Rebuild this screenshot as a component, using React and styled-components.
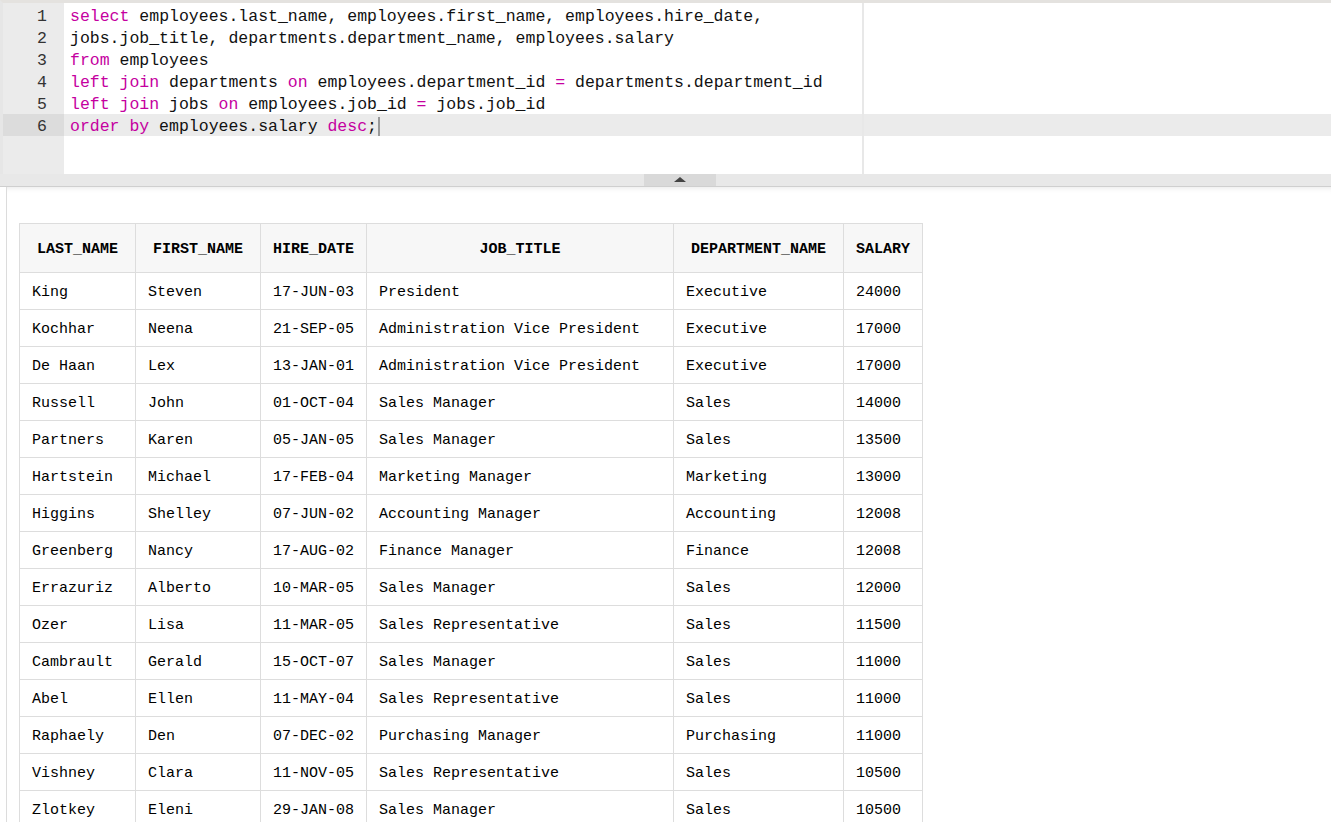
import React from "react";
import styled, { createGlobalStyle } from "styled-components";

const GlobalStyle = createGlobalStyle`
  html, body {
    margin: 0;
    padding: 0;
    background: #fff;
    overflow: hidden;
  }
  body {
    font-family: "Liberation Mono", "DejaVu Sans Mono", monospace;
    color: #111;
  }
`;

const Page = styled.div`
  display: flex;
  flex-direction: column;
  width: 1331px;
`;

const Editor = styled.div`
  display: flex;
  height: 171px;
  border-top: 3px solid #e4e2df;
  border-left: 3px solid #e6e6e6;
  background: #fff;
`;

const Gutter = styled.div`
  width: 61px;
  padding-top: 1px;
  background: #ebebeb;
  color: #333;
`;

const GutterCell = styled.div`
  box-sizing: border-box;
  height: 22px;
  padding-top: 3px;
  line-height: 19px;
  padding-right: 17px;
  text-align: right;
  font-size: 16.5px;
  background: ${(p) => (p.$active ? "#dcdcdc" : "transparent")};
`;

const Code = styled.div`
  flex: 1;
  position: relative;
  padding-top: 1px;

  &::after {
    content: "";
    position: absolute;
    top: 0;
    bottom: 0;
    left: 798px;
    width: 2px;
    background: #e8e8e8;
  }
`;

const CodeLine = styled.div`
  box-sizing: border-box;
  height: 22px;
  padding-top: 3px;
  line-height: 19px;
  padding-left: 6px;
  font-size: 16.5px;
  white-space: pre;
  color: #111;
  background: ${(p) => (p.$active ? "#ebebeb" : "transparent")};
`;

const Kw = styled.span`
  color: #c500a0;
`;

const Caret = styled.span`
  display: inline-block;
  width: 2px;
  height: 19px;
  margin-left: 1px;
  vertical-align: -5px;
  background: #999;
`;

const Splitter = styled.div`
  height: 12px;
  background: #e8e8e8;
  border-bottom: 1px solid #cfcfcf;
  display: flex;
  padding-left: 644px;
`;

const Handle = styled.div`
  width: 72px;
  height: 12px;
  background: #d9d9d9;
  display: flex;
  justify-content: center;
  align-items: flex-start;
  padding-top: 3px;
  box-sizing: border-box;

  &::before {
    content: "";
    width: 0;
    height: 0;
    border-left: 6px solid transparent;
    border-right: 6px solid transparent;
    border-bottom: 5px solid #444;
  }
`;

const Results = styled.div`
  margin-left: 6px;
  border-left: 1px solid #dcdcdc;
  padding: 36px 0 0 12px;
  box-shadow: inset 0 6px 6px -6px rgba(0, 0, 0, 0.12);
  min-height: 700px;
`;

const Table = styled.table`
  border-collapse: collapse;
  table-layout: fixed;
  width: 903px;
  font-size: 15px;
  font-family: "Liberation Mono", "DejaVu Sans Mono", monospace;
`;

const Th = styled.th`
  height: 46px;
  padding: 2px 12px 0;
  background: #f7f7f7;
  border: 1px solid #dddddd;
  font-weight: bold;
  text-align: center;
  color: #000;
  white-space: nowrap;
`;

const Td = styled.td`
  height: 34px;
  padding: 2px 12px 0;
  border: 1px solid #dddddd;
  color: #000;
  white-space: nowrap;
`;

const columns = [
  { key: "last", label: "LAST_NAME", width: 116 },
  { key: "first", label: "FIRST_NAME", width: 125 },
  { key: "hire", label: "HIRE_DATE", width: 106 },
  { key: "job", label: "JOB_TITLE", width: 307 },
  { key: "dept", label: "DEPARTMENT_NAME", width: 170 },
  { key: "salary", label: "SALARY", width: 79 },
];

const rows = [
  ["King", "Steven", "17-JUN-03", "President", "Executive", "24000"],
  ["Kochhar", "Neena", "21-SEP-05", "Administration Vice President", "Executive", "17000"],
  ["De Haan", "Lex", "13-JAN-01", "Administration Vice President", "Executive", "17000"],
  ["Russell", "John", "01-OCT-04", "Sales Manager", "Sales", "14000"],
  ["Partners", "Karen", "05-JAN-05", "Sales Manager", "Sales", "13500"],
  ["Hartstein", "Michael", "17-FEB-04", "Marketing Manager", "Marketing", "13000"],
  ["Higgins", "Shelley", "07-JUN-02", "Accounting Manager", "Accounting", "12008"],
  ["Greenberg", "Nancy", "17-AUG-02", "Finance Manager", "Finance", "12008"],
  ["Errazuriz", "Alberto", "10-MAR-05", "Sales Manager", "Sales", "12000"],
  ["Ozer", "Lisa", "11-MAR-05", "Sales Representative", "Sales", "11500"],
  ["Cambrault", "Gerald", "15-OCT-07", "Sales Manager", "Sales", "11000"],
  ["Abel", "Ellen", "11-MAY-04", "Sales Representative", "Sales", "11000"],
  ["Raphaely", "Den", "07-DEC-02", "Purchasing Manager", "Purchasing", "11000"],
  ["Vishney", "Clara", "11-NOV-05", "Sales Representative", "Sales", "10500"],
  ["Zlotkey", "Eleni", "29-JAN-08", "Sales Manager", "Sales", "10500"],
];

const codeLines = [
  <>
    <Kw>select</Kw> employees.last_name, employees.first_name, employees.hire_date,
  </>,
  <>jobs.job_title, departments.department_name, employees.salary</>,
  <>
    <Kw>from</Kw> employees
  </>,
  <>
    <Kw>left join</Kw> departments <Kw>on</Kw> employees.department_id <Kw>=</Kw> departments.department_id
  </>,
  <>
    <Kw>left join</Kw> jobs <Kw>on</Kw> employees.job_id <Kw>=</Kw> jobs.job_id
  </>,
  <>
    <Kw>order by</Kw> employees.salary <Kw>desc</Kw>;<Caret />
  </>,
];

const ACTIVE = 5;

export default function App() {
  return (
    <>
      <GlobalStyle />
      <Page>
        <Editor>
          <Gutter>
            {codeLines.map((_, i) => (
              <GutterCell key={i} $active={i === ACTIVE}>
                {i + 1}
              </GutterCell>
            ))}
          </Gutter>
          <Code>
            {codeLines.map((line, i) => (
              <CodeLine key={i} $active={i === ACTIVE}>
                {line}
              </CodeLine>
            ))}
          </Code>
        </Editor>
        <Splitter>
          <Handle />
        </Splitter>
        <Results>
          <Table>
            <colgroup>
              {columns.map((c) => (
                <col key={c.key} style={{ width: c.width }} />
              ))}
            </colgroup>
            <thead>
              <tr>
                {columns.map((c) => (
                  <Th key={c.key}>{c.label}</Th>
                ))}
              </tr>
            </thead>
            <tbody>
              {rows.map((r, i) => (
                <tr key={i}>
                  {r.map((v, j) => (
                    <Td key={j}>{v}</Td>
                  ))}
                </tr>
              ))}
            </tbody>
          </Table>
        </Results>
      </Page>
    </>
  );
}
